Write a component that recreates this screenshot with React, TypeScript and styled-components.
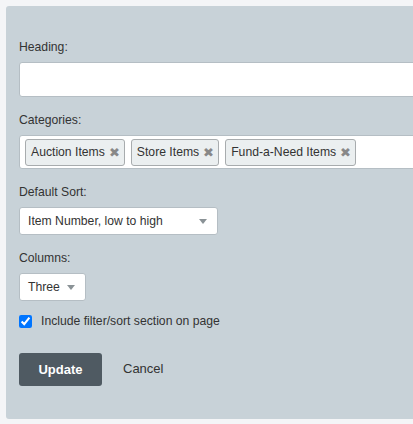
import React from 'react';
import styled, { createGlobalStyle } from 'styled-components';

const categories = ['Auction Items', 'Store Items', 'Fund-a-Need Items'];

const App: React.FC = () => {
    return (
        <>
            <GlobalStyle />
            <Page>
                <Panel>
                    <Field>
                        <Label>Heading:</Label>
                        <TextInput type="text" />
                    </Field>
                    <Field>
                        <Label>Categories:</Label>
                        <TagBox>
                            {categories.map(c => (
                                <Tag key={c}>
                                    {c}
                                    <TagRemove>✖</TagRemove>
                                </Tag>
                            ))}
                        </TagBox>
                    </Field>
                    <Field>
                        <Label>Default Sort:</Label>
                        <Select width={199}>
                            <span>Item Number, low to high</span>
                            <Caret />
                        </Select>
                    </Field>
                    <Field>
                        <Label>Columns:</Label>
                        <Select width={67}>
                            <span>Three</span>
                            <Caret />
                        </Select>
                    </Field>
                    <CheckRow>
                        <input type="checkbox" defaultChecked />
                        <span>Include filter/sort section on page</span>
                    </CheckRow>
                    <Actions>
                        <PrimaryButton>Update</PrimaryButton>
                        <LinkButton>Cancel</LinkButton>
                    </Actions>
                </Panel>
            </Page>
        </>
    );
};

const Page = styled.div`
    width: 413px;
    height: 424px;
    overflow: hidden;
    padding: 6px 0 0 6px;
    box-sizing: border-box;
    background: #f4f5f7;
    font-family: Arial, 'Liberation Sans', sans-serif;
    font-size: 12.2px;
    color: #333;

    * {
        box-sizing: border-box;
    }
`;

const Panel = styled.div`
    width: 500px;
    height: 413px;
    background: #c8d2d8;
    border-radius: 3px;
    padding: 34px 0 0 13px;
    display: flex;
    flex-direction: column;
`;

const Field = styled.div`
    display: flex;
    flex-direction: column;
    margin-bottom: 16px;
`;

const Label = styled.label`
    line-height: 14px;
    margin-bottom: 8px;
`;

const TextInput = styled.input`
    width: 420px;
    height: 35px;
    border: 1px solid #b5bec4;
    border-radius: 3px;
    background: #fff;
    outline: none;
`;

const TagBox = styled.div`
    width: 420px;
    height: 34px;
    border: 1px solid #b5bec4;
    border-radius: 3px;
    background: #fff;
    display: flex;
    align-items: center;
    gap: 6px;
    padding: 0 5px;
`;

const Tag = styled.div`
    height: 27px;
    display: flex;
    align-items: center;
    gap: 4px;
    padding: 0 4px 0 5px;
    background: #ebeff0;
    border: 1px solid #a8acae;
    border-radius: 3px;
    color: #333;
    line-height: 1;
`;

const TagRemove = styled.span`
    color: #888;
    font-size: 13px;
    line-height: 1;
`;

const Select = styled.div<{ width: number }>`
    width: ${p => p.width}px;
    height: 28px;
    background: #fff;
    border: 1px solid #b5bec4;
    border-radius: 3px;
    display: flex;
    align-items: center;
    justify-content: space-between;
    padding: 0 10px 0 8px;
`;

const Caret = styled.span`
    width: 0;
    height: 0;
    border-left: 4px solid transparent;
    border-right: 4px solid transparent;
    border-top: 5px solid #8a9296;
    margin-top: 1px;
`;

const CheckRow = styled.label`
    display: flex;
    align-items: center;
    gap: 9px;
    margin-top: -3px;

    input {
        margin: 0;
        width: 13px;
        height: 13px;
        accent-color: #0075ff;
    }
`;

const Actions = styled.div`
    display: flex;
    align-items: center;
    gap: 21px;
    margin-top: 25px;
`;

const PrimaryButton = styled.button`
    width: 83px;
    height: 33px;
    border: none;
    border-radius: 3px;
    background: #4f5a62;
    color: #fff;
    font-family: Arial, 'Liberation Sans', sans-serif;
    font-size: 13px;
    font-weight: bold;
`;

const LinkButton = styled.button`
    border: none;
    background: none;
    padding: 0;
    margin-top: -3px;
    color: #333;
    font-family: Arial, 'Liberation Sans', sans-serif;
    font-size: 13px;
`;

const GlobalStyle = createGlobalStyle`
    body {
        margin: 0;
    }
`;

export default App;
